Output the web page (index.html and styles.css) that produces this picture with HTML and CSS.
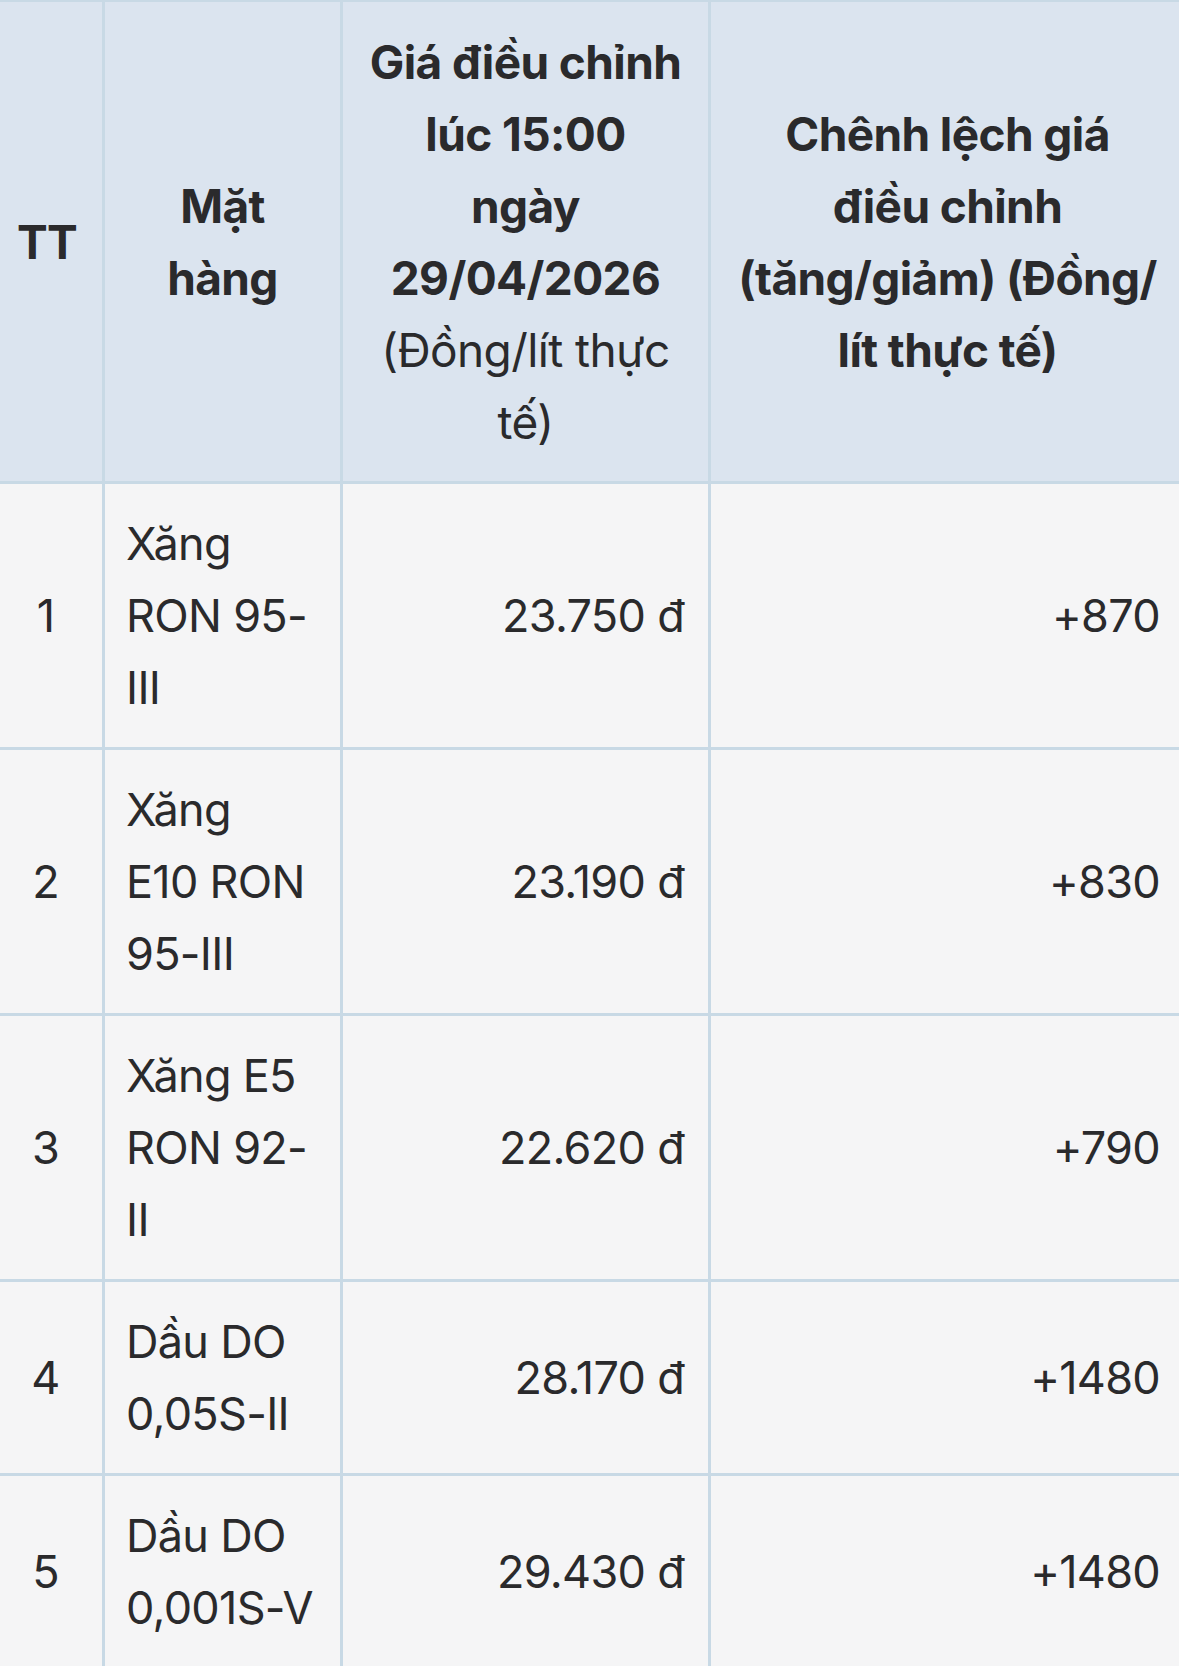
FILE: index.html
```html
<!DOCTYPE html>
<html lang="vi">
<head>
<meta charset="utf-8">
<title>Giá xăng dầu</title>
<link rel="stylesheet" href="styles.css">
</head>
<body>
<div class="wrap">
<table class="price-table">
  <colgroup>
    <col class="c-tt">
    <col class="c-name">
    <col class="c-price">
    <col class="c-diff">
  </colgroup>
  <thead>
    <tr>
      <th>TT</th>
      <th>Mặt<br>hàng</th>
      <th>Giá điều chỉnh lúc 15:00<br>ngày 29/04/2026 <span class="unit">(Đồng/lít thực tế)</span></th>
      <th>Chênh lệch giá<br>điều chỉnh<br>(tăng/giảm) (Đồng/<br>lít thực tế)</th>
    </tr>
  </thead>
  <tbody>
    <tr>
      <td class="tt">1</td>
      <td class="name">Xăng RON 95-III</td>
      <td class="num">23.750 đ</td>
      <td class="num">+870</td>
    </tr>
    <tr>
      <td class="tt">2</td>
      <td class="name">Xăng<br>E10 RON 95-III</td>
      <td class="num">23.190 đ</td>
      <td class="num">+830</td>
    </tr>
    <tr>
      <td class="tt">3</td>
      <td class="name">Xăng E5 RON 92-II</td>
      <td class="num">22.620 đ</td>
      <td class="num">+790</td>
    </tr>
    <tr>
      <td class="tt">4</td>
      <td class="name">Dầu DO 0,05S-II</td>
      <td class="num">28.170 đ</td>
      <td class="num">+1480</td>
    </tr>
    <tr>
      <td class="tt">5</td>
      <td class="name">Dầu DO 0,001S-V</td>
      <td class="num">29.430 đ</td>
      <td class="num">+1480</td>
    </tr>
  </tbody>
</table>
</div>
</body>
</html>
```
FILE: styles.css
```css
html, body {
  margin: 0;
  padding: 0;
  background: #f5f5f6;
}
body {
  font-family: Inter, "Noto Sans", "Liberation Sans", sans-serif;
  color: #2a2a2c;
  overflow: hidden;
}
.wrap {
  margin-left: -11px;
  margin-top: -1px;
  width: 1195px;
}
.price-table {
  border-collapse: collapse;
  table-layout: fixed;
  width: 1195px;
}
.c-tt { width: 113px; }
.c-name { width: 238px; }
.c-price { width: 368px; }
.c-diff { width: 476px; }
.price-table th,
.price-table td {
  border: 3px solid #c8d9e5;
  padding: 24px 24px 23px 21px;
  line-height: 72px;
  vertical-align: middle;
}
.price-table th {
  background: #dbe4ef;
  font-size: 46px;
  font-weight: 700;
  text-align: center;
  letter-spacing: -0.6px;
  padding-left: 12px;
  padding-right: 12px;
}
.price-table th .unit {
  font-weight: 400;
}
.price-table td {
  background: #f5f5f6;
  font-size: 45px;
  font-weight: 400;
  letter-spacing: -0.7px;
}
.price-table td.tt {
  text-align: center;
}
.price-table td.name {
  text-align: left;
}
.price-table td.num {
  text-align: right;
}
```
